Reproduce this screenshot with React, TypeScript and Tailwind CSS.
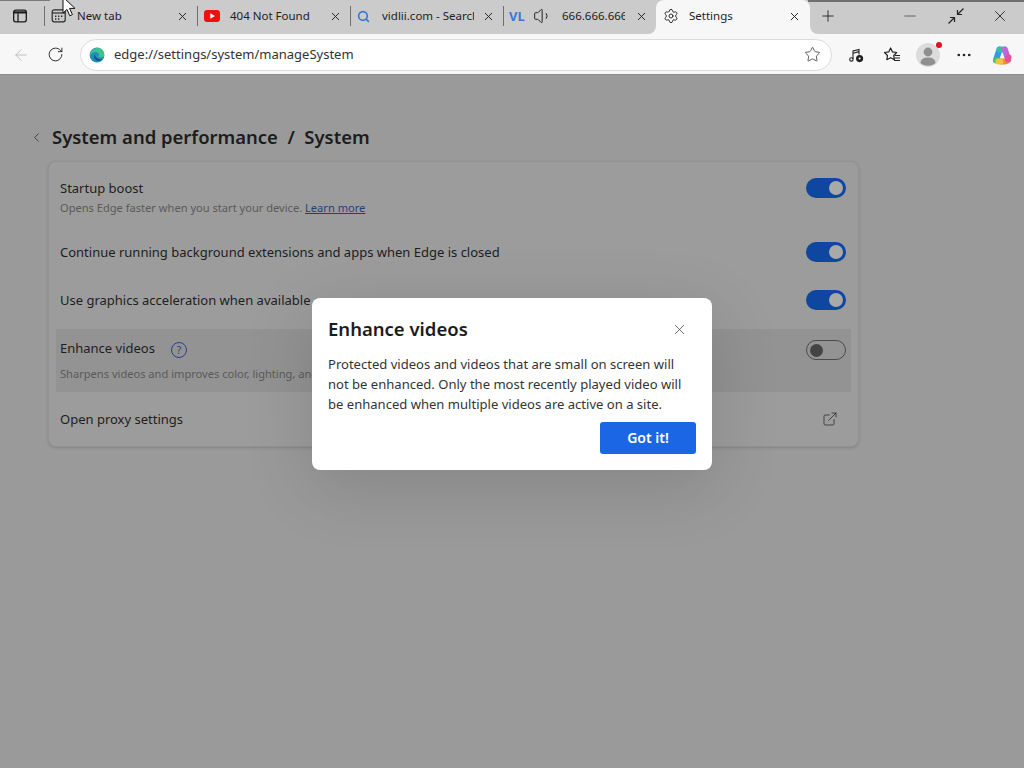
import React from 'react';
import { X, Plus, Minus, RotateCw, ArrowLeft, Star, MoreHorizontal, Settings, Volume1, ChevronLeft, Search, ExternalLink } from 'lucide-react';

// ---- Small drawings ----

function SidebarIcon() {
  return (
    <svg width="16" height="16" viewBox="0 0 16 16" fill="none" stroke="#1a1a1a" strokeWidth="1.3">
      <rect x="1.7" y="2.2" width="12.6" height="11.6" rx="2" />
      <path d="M1.7 4.400h12.600" strokeWidth="2.2" />
      <path d="M6 5.400v8.400" />
    </svg>
  );
}

function NewTabIcon() {
  return (
    <svg width="16" height="16" viewBox="0 0 16 16" fill="none" stroke="#2a2a2a" strokeWidth="1.2">
      <rect x="1.2" y="1.8" width="13" height="12" rx="2" />
      <path d="M1.2 5h13" />
      <path d="M4 8.200h1.400M7 8.200h1.400M10 8.200h1.400M4 11h1.400M7 11h1.400" strokeWidth="1.6" />
    </svg>
  );
}

function YoutubeIcon() {
  return (
    <svg width="16" height="12" viewBox="0 0 16 12">
      <rect width="16" height="12" rx="3" fill="#ee0f0f" />
      <path d="M6.300 3.200v5.600L11 6z" fill="#fff" />
    </svg>
  );
}

function EdgeLogo() {
  return (
    <svg width="16" height="16" viewBox="0 0 16 16">
      <circle cx="8" cy="8" r="7.400" fill="#1f8fb8" />
      <path d="M1 8.600C1.600 4 5 1.400 8.600.8c3.400.3 6.400 3 6.600 7 .1 1.800-1.400 2.600-3.200 2.600-1.400 0-2.600-.4-2.800-1 1-.6 1.200-2.200.2-3.200C8 4.800 5.400 4.600 3.600 6 2.400 6.600 1.600 7.400 1 8.600z" fill="#3cc48a" />
      <path d="M6 7.800c-1.600 1.400-.8 4.600 2 5.600 1.800.7 4.400.2 6-1.600-1.600.8-4 .8-5.600-.2C6.800 10.600 6 9.200 6 7.800z" fill="#0f4f86" />
    </svg>
  );
}

function CopilotLogo() {
  return (
    <svg width="22" height="22" viewBox="0 0 22 22" fill="none" strokeWidth="6" strokeLinecap="round">
      <path d="M8.500 5.500L5 16" stroke="#2f9be8" />
      <path d="M8.500 5.500h5" stroke="#38bfa6" />
      <path d="M5 16.500h2" stroke="#4cc46c" />
      <path d="M14 5.500l3 10" stroke="#c264dc" />
      <path d="M17 16c-.8 1-1.600 1.500-3 1.500h-4" stroke="#f08a3c" />
      <path d="M17.500 13.500l-.5 2" stroke="#e8509c" />
      <path d="M7.500 17.500h2" stroke="#f2c23c" />
    </svg>
  );
}

function MediaIcon() {
  return (
    <svg width="18" height="18" viewBox="0 0 18 18" fill="none" stroke="#222" strokeWidth="1.1">
      <path d="M6 13V5l6-1.600v5" />
      <circle cx="4.400" cy="13.400" r="1.700" />
      <path d="M6 7.200l6-1.600" />
      <circle cx="12.600" cy="12.600" r="3" fill="#222" />
      <circle cx="12.600" cy="12.600" r="1" fill="#fff" stroke="none" />
    </svg>
  );
}

function FavoritesIcon() {
  return (
    <svg width="18" height="18" viewBox="0 0 18 18" fill="none" stroke="#222" strokeWidth="1.2" strokeLinejoin="round">
      <path d="M7.600 2l1.900 3.900 4.200.6-3 3 .7 4.200-3.800-2-3.800 2 .7-4.200-3-3 4.200-.6z" />
      <path d="M12 9.500h5M11.600 12h5.400M11 14.500h6" />
    </svg>
  );
}

function ProfileIcon() {
  return (
    <div className="relative h-[24px] w-[24px] rounded-full bg-[#dcdcdc]">
      <svg width="24" height="24" viewBox="0 0 24 24" fill="#8f8f8f">
        <circle cx="12" cy="9" r="4.400" />
        <path d="M4.500 20c.4-4 3.400-5.400 7.500-5.400s7.100 1.400 7.500 5.400c-2 1.800-4.600 2.800-7.500 2.800S6.500 21.800 4.500 20z" />
      </svg>
      <span className="absolute right-[-2px] top-[-1px] h-[6px] w-[6px] rounded-full bg-[#e0101c]" />
    </div>
  );
}

function RestoreArrows() {
  return (
    <svg width="18" height="18" viewBox="0 0 18 18" fill="none" stroke="#222" strokeWidth="1.2">
      <path d="M16.500 1.500L10.500 7.500M10.500 3v4.500H15" />
      <path d="M1.500 16.500L7.500 10.500M7.500 15v-4.500H3" />
    </svg>
  );
}

function Cursor() {
  return (
    <svg className="absolute left-[62px] top-[-4px]" width="14" height="22" viewBox="0 0 14 22">
      <path d="M1 1v16l4-3.600 2.800 6.400 2.600-1.200-2.800-6.200H13z" fill="#fff" stroke="#111" strokeWidth="1" />
    </svg>
  );
}

// ---- Browser chrome ----

interface TabProps {
  icon: React.ReactNode;
  title: string;
  textClass?: string;
}

function Tab({ icon, title, textClass }: TabProps) {
  return (
    <div className="flex h-[32px] w-[152px] shrink-0 items-center pl-[6px] pr-[8px]">
      <div className="flex shrink-0 items-center">{icon}</div>
      <span className={`min-w-0 flex-1 overflow-hidden whitespace-nowrap text-[11.5px] text-[#222] ${textClass ?? ''}`}>{title}</span>
      <X className="ml-[4px] shrink-0 text-[#222]" size={13} strokeWidth={1.8} />
    </div>
  );
}

function TabDivider() {
  return <div className="h-[20px] w-px shrink-0 bg-[#6e6e6e]" />;
}

function TabStrip() {
  return (
    <div className="relative flex h-[34px] items-center bg-[#cbcbcb] pb-[2px]">
      <div className="absolute left-0 top-0 h-px w-[50px] bg-[#7a7a7a]" />
      <div className="absolute right-0 top-0 h-[2px] w-[216px] bg-[#6f6f6f]" />
      <div className="flex w-[40px] shrink-0 justify-center">
        <SidebarIcon />
      </div>
      <div className="w-[4px] shrink-0" />
      <TabDivider />
      <Tab icon={<NewTabIcon />} title="New tab" textClass="pl-[10px]" />
      <TabDivider />
      <Tab icon={<YoutubeIcon />} title="404 Not Found" textClass="pl-[10px]" />
      <TabDivider />
      <div className="flex h-[32px] w-[152px] shrink-0 items-center pl-[6px] pr-[8px]">
        <Search className="shrink-0 text-[#2c7ad6]" size={13} strokeWidth={3} />
        <span className="ml-[12px] w-[92px] overflow-hidden whitespace-nowrap text-[11.5px] text-[#222]">vidlii.com - Search</span>
        <X className="ml-auto shrink-0 text-[#222]" size={13} strokeWidth={1.8} />
      </div>
      <TabDivider />
      <div className="flex h-[32px] w-[152px] shrink-0 items-center pl-[5px] pr-[8px]">
        <span className="w-[18px] text-[13px] font-bold leading-none text-[#3a78d8]">VL</span>
        <Volume1 className="ml-[6px] shrink-0 text-[#222]" size={20} strokeWidth={1.2} />
        <span className="ml-[9px] w-[63px] overflow-hidden whitespace-nowrap text-[11.5px] text-[#222]">666.666.666</span>
        <X className="ml-auto shrink-0 text-[#222]" size={13} strokeWidth={1.8} />
      </div>
      <div className="relative flex h-[34px] w-[154px] shrink-0 items-center self-start rounded-t-[8px] bg-[#f7f7f7] pb-[2px] pl-[7px] pr-[9px]">
        <span className="absolute bottom-0 left-[-8px] h-[8px] w-[8px] bg-[#f7f7f7]">
          <span className="block h-full w-full rounded-br-[8px] bg-[#cbcbcb]" />
        </span>
        <span className="absolute bottom-0 right-[-8px] h-[8px] w-[8px] bg-[#f7f7f7]">
          <span className="block h-full w-full rounded-bl-[8px] bg-[#cbcbcb]" />
        </span>
        <Settings className="shrink-0 text-[#222]" size={16} strokeWidth={1.4} />
        <span className="min-w-0 flex-1 pl-[10px] text-[11.5px] text-[#222]">Settings</span>
        <X className="shrink-0 text-[#222]" size={13} strokeWidth={1.8} />
      </div>
      <div className="ml-[9px] flex w-[18px] justify-center">
        <Plus className="text-[#222]" size={18} strokeWidth={1.2} />
      </div>
      <div className="ml-auto flex items-center pr-[15px]">
        <Minus className="text-[#555]" size={18} strokeWidth={1.2} />
        <div className="ml-[28px]"><RestoreArrows /></div>
        <X className="ml-[26px] text-[#222]" size={18} strokeWidth={1.2} />
      </div>
    </div>
  );
}

function Toolbar() {
  return (
    <div className="flex h-[41px] items-center border-b border-[#8d8d8d] bg-[#f7f7f7] pt-[1px]">
      <ArrowLeft className="ml-[12px] text-[#bdbdbd]" size={18} strokeWidth={1.3} />
      <RotateCw className="ml-[17px] text-[#222]" size={17} strokeWidth={1.3} />
      <div className="ml-[16px] flex h-[32px] w-[752px] items-center rounded-full border border-[#dcdcdc] bg-white pl-[8px] pr-[10px]">
        <EdgeLogo />
        <span className="ml-[9px] flex-1 text-[13px] text-[#333]">edge://settings/system/manageSystem</span>
        <Star className="text-[#333]" size={17} strokeWidth={1.1} />
      </div>
      <div className="ml-[15px]"><MediaIcon /></div>
      <div className="ml-[18px]"><FavoritesIcon /></div>
      <div className="ml-[15px]"><ProfileIcon /></div>
      <MoreHorizontal className="ml-[15px] text-[#222]" size={18} strokeWidth={1.6} />
      <div className="ml-[18px]"><CopilotLogo /></div>
    </div>
  );
}

// ---- Settings page ----

function Toggle({ on }: { on: boolean }) {
  if (on) {
    return (
      <div className="flex h-[20px] w-[40px] items-center justify-end rounded-full bg-[#0e46a0] pr-[3px]">
        <span className="h-[14px] w-[14px] rounded-full bg-[#a9a9a9]" />
      </div>
    );
  }
  return (
    <div className="flex h-[20px] w-[40px] items-center rounded-full border border-[#4a4a4a] pl-[3px]">
      <span className="h-[13px] w-[13px] rounded-full bg-[#444]" />
    </div>
  );
}

function SettingsCard() {
  return (
    <div className="ml-[48px] mt-[9px] w-[811px] rounded-[8px] border border-[#929292] bg-[#9c9c9c] pt-[4px] shadow-[0_1px_3px_rgba(0,0,0,0.15)]">
      <div className="flex h-[62px] items-center justify-between pl-[11px] pr-[12px]">
        <div>
          <div className="text-[13px] leading-[18px] text-[#1e1e1e]">Startup boost</div>
          <div className="mt-[3px] text-[11.1px] leading-[16px] text-[#5a5a5a]">
            Opens Edge faster when you start your device. <span className="text-[#1f3f80] underline">Learn more</span>
          </div>
        </div>
        <div className="mb-[18px]"><Toggle on /></div>
      </div>
      <div className="flex h-[48px] items-center justify-between pl-[11px] pr-[12px]">
        <span className="mt-[1px] text-[13px] text-[#1e1e1e]">Continue running background extensions and apps when Edge is closed</span>
        <Toggle on />
      </div>
      <div className="flex h-[48px] items-center justify-between pl-[11px] pr-[12px]">
        <span className="mt-[1px] text-[13px] text-[#1e1e1e]">Use graphics acceleration when available</span>
        <Toggle on />
      </div>
      <div className="mx-[7px] mt-[5px] flex h-[63px] items-start justify-between bg-[#939393] pl-[4px] pr-[5px] pt-[11px]">
        <div>
          <div className="flex h-[18px] items-center text-[13px] text-[#1e1e1e]">
            Enhance videos
            <span className="ml-[16px] mt-[2px] flex h-[16px] w-[16px] items-center justify-center rounded-full border border-[#24418a] text-[10px] text-[#24418a]">?</span>
          </div>
          <div className="mt-[8px] text-[11.1px] leading-[16px] text-[#5a5a5a]">Sharpens videos and improves color, lighting, and contrast</div>
        </div>
        <Toggle on={false} />
      </div>
      <div className="flex h-[54px] items-center justify-between pl-[11px] pr-[20px]">
        <span className="mt-[1px] text-[13px] text-[#1e1e1e]">Open proxy settings</span>
        <ExternalLink className="text-[#222]" size={16} strokeWidth={1.1} />
      </div>
    </div>
  );
}

function EnhanceDialog() {
  return (
    <div className="absolute left-[312px] top-[298px] h-[172px] w-[400px] rounded-[8px] bg-white px-[16px] pt-[18px] shadow-[0_16px_70px_rgba(0,0,0,0.14)]">
      <div className="flex items-center justify-between">
        <h2 className="text-[18.5px] font-semibold leading-[26px] text-[#1c1c1c]">Enhance videos</h2>
        <X className="mr-[8px] text-[#333]" size={17} strokeWidth={1} />
      </div>
      <p className="mt-[12px] text-[13.05px] leading-[20px] text-[#333]">
        Protected videos and videos that are small on screen will not be enhanced. Only the most recently played video will be enhanced when multiple videos are active on a site.
      </p>
      <div className="mt-[8px] flex justify-end">
        <button className="h-[32px] w-[96px] rounded-[3px] bg-[#1a66e5] pb-[2px] text-[14px] font-semibold text-white">Got it!</button>
      </div>
    </div>
  );
}

export default function App() {
  return (
    <div className="relative h-[768px] w-[1024px] overflow-hidden bg-[#9a9a9a] font-['Noto_Sans',sans-serif]">
      <TabStrip />
      <Toolbar />
      <div className="ml-[29px] mt-[47px] flex h-[30px] items-center">
        <ChevronLeft className="text-[#444]" size={15} strokeWidth={1.6} />
        <h1 className="ml-[8px] whitespace-pre text-[18.45px] font-semibold text-[#1c1c1c]">System and performance  /  System</h1>
      </div>
      <SettingsCard />
      <EnhanceDialog />
      <Cursor />
    </div>
  );
}
